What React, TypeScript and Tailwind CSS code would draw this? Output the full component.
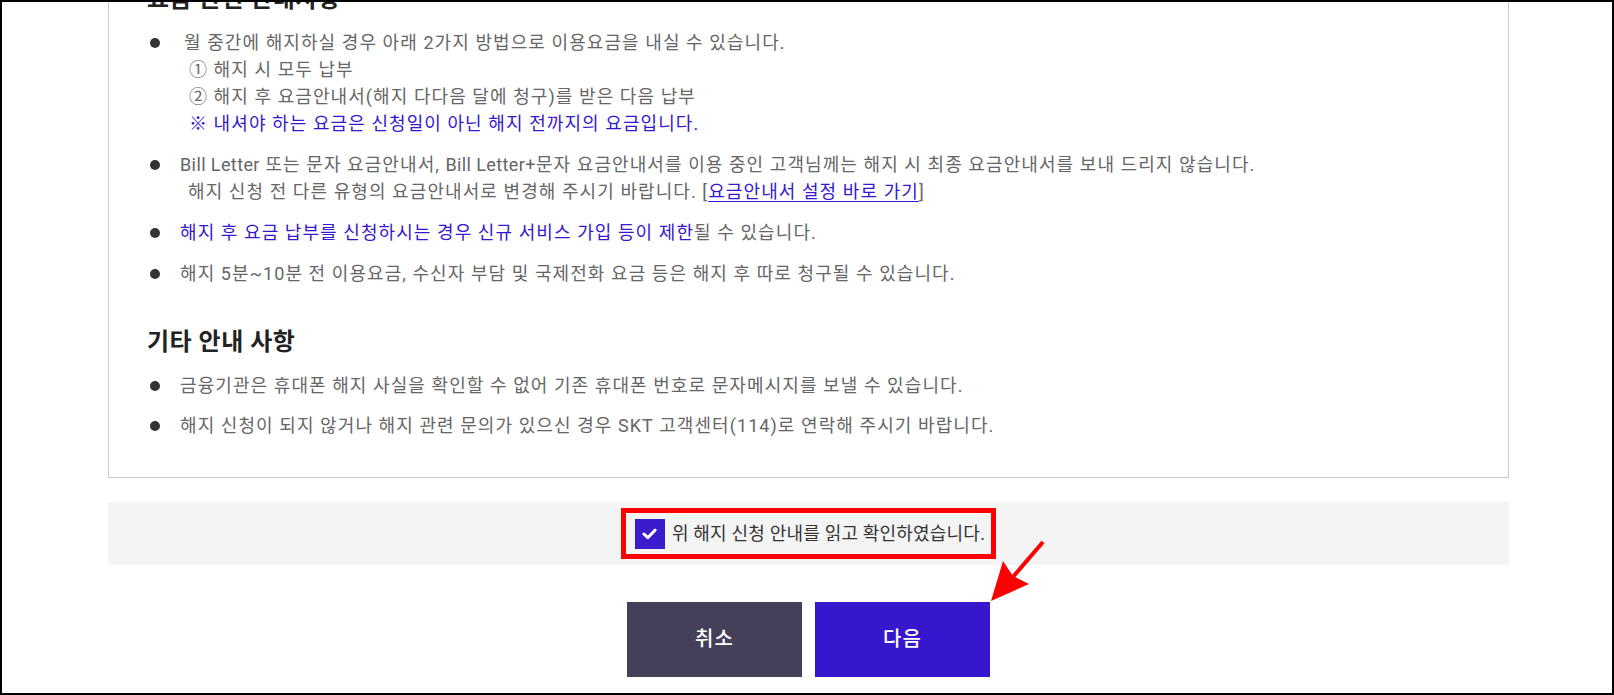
import React from "react";

// bullet item used in the notice box
function Item({ children, className = "" }: { children: React.ReactNode; className?: string }) {
  return (
    <li className={`flex ${className}`}>
      <span className="mt-[8.5px] ml-[3px] mr-[20px] h-[10px] w-[10px] shrink-0 rounded-full bg-[#333333]" />
      <div className="min-w-0">{children}</div>
    </li>
  );
}

export default function App() {
  return (
    <div className="relative h-[695px] w-[1614px] overflow-hidden border-2 border-black bg-white font-[Roboto,'Noto_Sans_CJK_KR',sans-serif] text-[18px] leading-[27px] tracking-[1.08px] text-[#666666]">
      {/* notice box (scrolled, top is cut off) */}
      <div className="ml-[106px] mt-[-20px] w-[1401px] border border-t-0 border-[#cccccc] pb-[38px] pl-[38px]">
        <h3 className="text-[24px] leading-[34px] font-bold tracking-[0.5px] text-[#222222]">요금 관련 안내사항</h3>
        <ul className="mt-[13px] flex flex-col gap-[14px]">
          <Item>
            <p className="pl-[4px]">월 중간에 해지하실 경우 아래 2가지 방법으로 이용요금을 내실 수 있습니다.</p>
            <p className="pl-[9px]">① 해지 시 모두 납부</p>
            <p className="pl-[9px]">② 해지 후 요금안내서(해지 다다음 달에 청구)를 받은 다음 납부</p>
            <p className="pl-[9px] text-[#3617cd]">※ 내셔야 하는 요금은 신청일이 아닌 해지 전까지의 요금입니다.</p>
          </Item>
          <Item>
            <p>
              <span className="tracking-[0.4px]">Bill Letter</span> 또는 문자 요금안내서,{" "}
              <span className="tracking-[0.4px]">Bill Letter+</span>문자 요금안내서를 이용 중인 고객님께는 해지 시 최종 요금안내서를 보내 드리지 않습니다.
            </p>
            <p className="pl-[8px]">
              해지 신청 전 다른 유형의 요금안내서로 변경해 주시기 바랍니다. [
              <a href="#" className="text-[#3617cd] underline underline-offset-[3px]">요금안내서 설정 바로 가기</a>]
            </p>
          </Item>
          <Item>
            <p>
              <span className="text-[#3617cd]">해지 후 요금 납부를 신청하시는 경우 신규 서비스 가입 등이 제한</span>될 수 있습니다.
            </p>
          </Item>
          <Item>
            <p>해지 5분~10분 전 이용요금, 수신자 부담 및 국제전화 요금 등은 해지 후 따로 청구될 수 있습니다.</p>
          </Item>
        </ul>

        <h3 className="mt-[38px] text-[24px] leading-[34px] font-bold tracking-[0.5px] text-[#222222]">기타 안내 사항</h3>
        <ul className="mt-[13px] flex flex-col gap-[13px]">
          <Item>
            <p>금융기관은 휴대폰 해지 사실을 확인할 수 없어 기존 휴대폰 번호로 문자메시지를 보낼 수 있습니다.</p>
          </Item>
          <Item>
            <p>해지 신청이 되지 않거나 해지 관련 문의가 있으신 경우 SKT 고객센터(114)로 연락해 주시기 바랍니다.</p>
          </Item>
        </ul>
      </div>

      {/* agreement band */}
      <div className="ml-[106px] mt-[24px] flex h-[63px] w-[1401px] items-center justify-center bg-[#f4f4f4]">
        <label className="flex h-[51px] items-center border-[5px] border-[#ff0000] pl-[9px] pr-[6px]">
          <span className="flex h-[30px] w-[30px] items-center justify-center bg-[#3a1ccc]">
            <svg width="15" height="12" viewBox="0 0 15 12" fill="none">
              <path d="M2 6 L5.8 9.6 L13 2.2" stroke="white" strokeWidth="3" strokeLinecap="round" strokeLinejoin="round" />
            </svg>
          </span>
          <span className="ml-[7px] text-[18px] leading-[24px] tracking-[0.2px] text-[#333333]">위 해지 신청 안내를 읽고 확인하였습니다.</span>
        </label>
      </div>

      {/* buttons */}
      <div className="ml-[106px] mt-[37px] flex w-[1401px] justify-center gap-[13px]">
        <button className="flex h-[75px] w-[175px] items-center justify-center bg-[#45405a] text-[20px] font-medium text-white">취소</button>
        <button className="flex h-[75px] w-[175px] items-center justify-center bg-[#3617cd] text-[20px] font-medium text-white">다음</button>
      </div>

      {/* red annotation arrow */}
      <svg className="pointer-events-none absolute left-[-2px] top-[-2px]" width="1614" height="695">
        <line x1="1043" y1="542" x2="1012" y2="578" stroke="#ff0000" strokeWidth="4" />
        <polygon points="991,601 1003,561 1013,576 1029,584" fill="#ff0000" />
      </svg>
    </div>
  );
}
